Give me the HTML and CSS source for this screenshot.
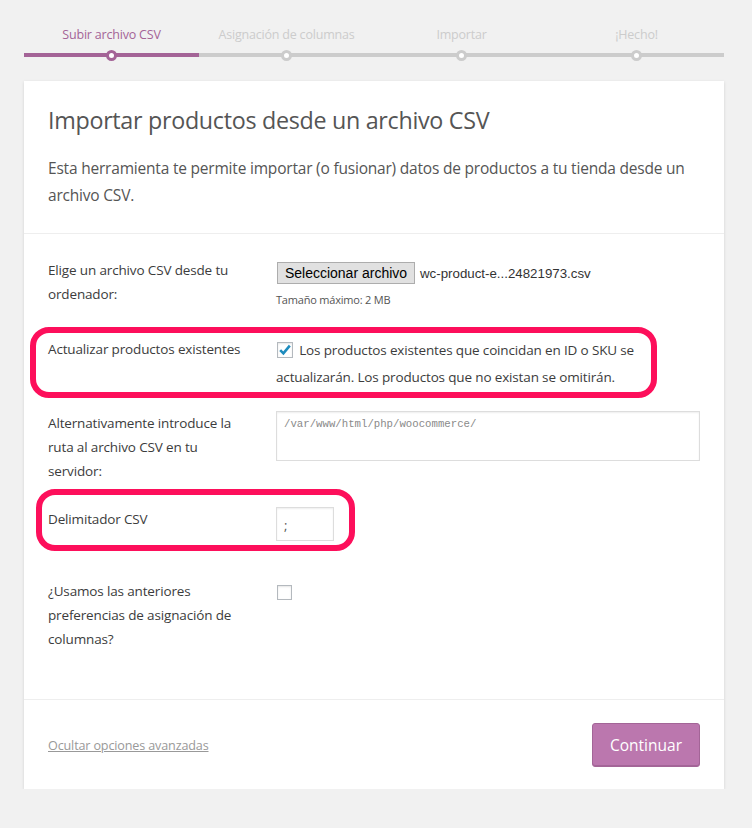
FILE: index.html
```html
<!DOCTYPE html>
<html lang="es">
<head>
<meta charset="utf-8">
<title>Importar productos</title>
<link rel="stylesheet" href="styles.css">
</head>
<body>
<ol class="steps">
  <li class="step done"><span class="step-label">Subir archivo CSV</span><span class="bar"></span></li>
  <li class="step"><span class="step-label">Asignación de columnas</span><span class="bar"></span></li>
  <li class="step"><span class="step-label">Importar</span><span class="bar"></span></li>
  <li class="step"><span class="step-label">¡Hecho!</span><span class="bar"></span></li>
</ol>

<div class="card">
  <header class="card-header">
    <h1 class="title">Importar productos desde un archivo CSV</h1>
    <p class="intro">Esta herramienta te permite importar (o fusionar) datos de productos a tu tienda desde un archivo CSV.</p>
  </header>

  <section class="form">
    <div class="row row-file">
      <div class="label">Elige un archivo CSV desde tu ordenador:</div>
      <div class="field">
        <div class="file-line"><span class="file-btn">Seleccionar archivo</span><span class="file-name">wc-product-e...24821973.csv</span></div>
        <div class="hint">Tamaño máximo: 2 MB</div>
      </div>
    </div>

    <div class="row row-update">
      <div class="label">Actualizar productos existentes</div>
      <div class="field check-field">
        <span class="checkbox checked"><svg viewBox="0 0 16 16" width="16" height="16"><path d="M3.2 8.2 L6.4 11.4 L12.8 3.6" fill="none" stroke="#1e8cbe" stroke-width="2.6" stroke-linecap="butt" stroke-linejoin="miter"/></svg></span>
        <span class="check-text">Los productos existentes que coincidan en ID o SKU se actualizarán. Los productos que no existan se omitirán.</span>
      </div>
      <span class="highlight hl-update"></span>
    </div>

    <div class="row row-path">
      <div class="label">Alternativamente introduce la ruta al archivo CSV en tu servidor:</div>
      <div class="field">
        <div class="textarea">/var/www/html/php/woocommerce/</div>
      </div>
    </div>

    <div class="row row-delim">
      <div class="label">Delimitador CSV</div>
      <div class="field">
        <div class="small-input">;</div>
      </div>
      <span class="highlight hl-delim"></span>
    </div>

    <div class="row row-mapping">
      <div class="label">¿Usamos las anteriores preferencias de asignación de columnas?</div>
      <div class="field">
        <span class="checkbox cb-empty"></span>
      </div>
    </div>
  </section>

  <footer class="card-footer">
    <a class="adv-link" href="#">Ocultar opciones avanzadas</a>
    <span class="btn-continue">Continuar</span>
  </footer>
</div>
</body>
</html>
```

FILE: styles.css
```css
*, *::before, *::after { box-sizing: border-box; }

body {
  margin: 0;
  background: #f1f1f1;
  font-family: "Open Sans", "Noto Sans", sans-serif;
  color: #444;
}

.steps {
  list-style: none;
  margin: 0 0 0 24px;
  padding: 26px 0 0;
  width: 700px;
  display: flex;
}

.step {
  flex: 1 1 0;
  min-width: 0;
  display: flex;
  flex-direction: column;
  align-items: center;
}

.step-label {
  font-size: 12.5px;
  line-height: 18px;
  color: #ccc;
  letter-spacing: -0.2px;
}

.bar {
  position: relative;
  align-self: stretch;
  height: 4px;
  margin-top: 9px;
  background: #ccc;
}

.bar::after {
  content: "";
  position: absolute;
  left: 50%;
  top: 50%;
  width: 11px;
  height: 11px;
  margin: -5.5px 0 0 -5.5px;
  border-radius: 50%;
  background: #fff;
  border: 3.5px solid #ccc;
}

.step.done .step-label { color: #a46497; }
.step.done .bar { background: #a46497; }
.step.done .bar::after { border-color: #a46497; }

.card {
  margin: 24px 0 0 24px;
  width: 700px;
  background: #fff;
  box-shadow: 0 1px 3px rgba(0,0,0,0.13);
}

.card-header {
  padding: 24px 24px 24px;
  border-bottom: 1px solid #eee;
}

.title {
  margin: 0;
  font-size: 23.3px;
  font-weight: 400;
  line-height: 30px;
  color: #555;
  letter-spacing: -0.3px;
}

.intro {
  margin: 20px 0 0;
  font-size: 15.5px;
  line-height: 27px;
  color: #555;
  letter-spacing: -0.2px;
}

.form {
  padding: 24px 24px 48px;
}

.row {
  position: relative;
  display: grid;
  grid-template-columns: 228px 1fr;
}

.label {
  font-size: 13.5px;
  line-height: 24px;
  color: #3c3c3c;
  padding-right: 24px;
  letter-spacing: -0.15px;
}

.row-file { margin-bottom: 28px; }
.row-update { margin-bottom: 20px; }
.row-path { margin-bottom: 24px; }
.row-delim { margin-bottom: 38px; }

.file-line {
  display: flex;
  align-items: center;
  margin-top: 4px;
  height: 22px;
}

.file-btn {
  display: inline-block;
  margin-left: 1px;
  height: 22px;
  width: 138px;
  line-height: 20px;
  text-align: center;
  font-family: "Liberation Sans", Arial, sans-serif;
  font-size: 14px;
  color: #000;
  background: #e1e1e1;
  border: 1px solid #adadad;
}

.file-name {
  margin-left: 5px;
  font-family: "Liberation Sans", Arial, sans-serif;
  font-size: 13.3px;
  color: #333;
}

.hint {
  margin-top: 7px;
  font-size: 11px;
  line-height: 18px;
  color: #555;
  letter-spacing: -0.2px;
}

.check-field {
  display: block;
}

.checkbox {
  display: inline-block;
  width: 16px;
  height: 16px;
  border: 1px solid #b4b9be;
  background: #fff;
  box-shadow: inset 0 1px 2px rgba(0,0,0,0.1);
  vertical-align: -3px;
  position: relative;
}

.checkbox svg {
  position: absolute;
  left: -1px;
  top: -1px;
}

.check-field .checkbox {
  margin-left: 1px;
  margin-right: 2px;
}

.check-text {
  font-size: 13.5px;
  line-height: 27px;
  color: #3c3c3c;
  letter-spacing: -0.15px;
}

.textarea {
  width: 424px;
  height: 50px;
  border: 1px solid #ddd;
  box-shadow: inset 0 1px 2px rgba(0,0,0,0.07);
  padding: 4px 7px;
  font-family: "Liberation Mono", "DejaVu Sans Mono", monospace;
  font-size: 10.7px;
  line-height: 16px;
  color: #8a8a8a;
}

.small-input {
  width: 58px;
  height: 34px;
  border: 1px solid #ddd;
  box-shadow: inset 0 1px 2px rgba(0,0,0,0.07);
  padding: 8px 7px;
  font-size: 13px;
  line-height: 18px;
  color: #555;
}

.row-mapping .checkbox {
  margin-top: 6px;
  margin-left: 1px;
  width: 15px;
  height: 15px;
}

.highlight {
  position: absolute;
  border: 6px solid #fd0f5b;
  border-radius: 19px;
  pointer-events: none;
}

.hl-update {
  left: -18px;
  top: -10px;
  width: 627px;
  height: 71px;
}

.hl-delim {
  left: -12px;
  top: -18px;
  width: 319px;
  height: 62px;
}

.card-footer {
  border-top: 1px solid #eee;
  padding: 23px 24px 22px;
  display: flex;
  align-items: center;
  justify-content: space-between;
}

.adv-link {
  font-size: 12.6px;
  color: #999;
  text-decoration: underline;
  letter-spacing: -0.15px;
}

.btn-continue {
  display: inline-block;
  height: 44px;
  padding: 0 17px;
  line-height: 43px;
  font-size: 15.5px;
  color: #fff;
  background: #bb77ae;
  border: 1px solid #a36597;
  border-radius: 3px;
  box-shadow: inset 0 -1px 0 #a36597;
}
```
